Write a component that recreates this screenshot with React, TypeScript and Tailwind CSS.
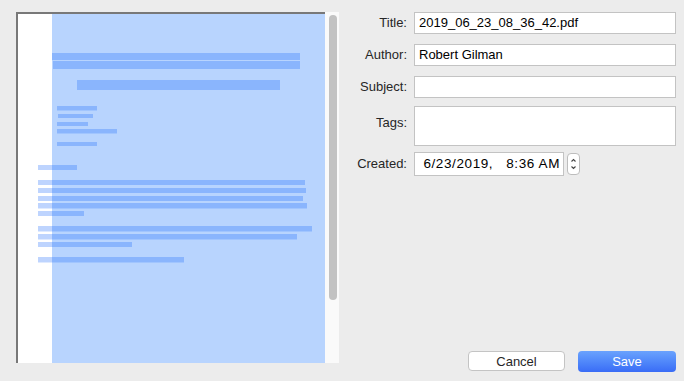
const bars = [
    [34, 39, 248, 7], [35, 47, 247, 8], [59, 66, 203, 10],
    [39, 92, 40, 4.5], [40, 100, 35, 4], [39, 108, 31, 4], [39, 115, 60, 4.5], [39, 128, 40, 4],
    [20, 151, 39, 5],
    [20, 166, 267, 5], [20, 174, 268, 5], [20, 182, 265, 5], [20, 189, 269, 5.5], [20, 197, 46, 5],
    [20, 212, 274, 5.5], [20, 220, 259, 5.5], [20, 228, 94, 5],
    [20, 243, 146, 5.5],
]

function PagePreview() {
    return (
        <div className="flex ml-4 mt-3 h-[351px]">
            <div className="w-[309px] h-full border-l-2 border-t-2 border-[#787878] bg-white">
                <svg width="307" height="349" className="block">
                    <rect x="34" y="0" width="273" height="349" fill="#b8d4fe" />
                    {bars.map(([x, y, w, h], i) =>
                        <rect key={i} x={x} y={y} width={w} height={h} fill="#1464fa" fillOpacity="0.28" />
                    )}
                </svg>
            </div>
            <div className="w-[14px] h-full bg-[#fafafa] pt-[3px] pl-[4px]">
                <div className="w-[8px] h-[285px] rounded-full bg-[#c2c2c2]" />
            </div>
        </div>
    )
}

function Field({ label, value, className }: { label: string, value?: string, className?: string }) {
    return (
        <div className={"flex items-center " + (className ?? "")}>
            <div className="w-[69px] text-right text-[13px] text-[#262626] pr-[1px]">{label}</div>
            <div className="ml-[6px] flex-1 h-[22px] border border-[#c3c3c3] bg-white px-[4px] flex items-center text-[13px] text-black">
                {value}
            </div>
        </div>
    )
}

export default function App() {
    return (
        <div className="w-[684px] h-[381px] bg-[#ececec] flex" style={{ fontFamily: '"Liberation Sans", Arial, sans-serif' }}>
            <PagePreview />
            <div className="flex-1 flex flex-col pr-2">
                <Field label="Title:" value="2019_06_23_08_36_42.pdf" className="mt-3" />
                <Field label="Author:" value="Robert Gilman" className="mt-[10px]" />
                <Field label="Subject:" className="mt-[10px]" />
                <div className="flex mt-2">
                    <div className="w-[69px] text-right text-[13px] text-[#262626] pr-[1px] pt-[7px]">Tags:</div>
                    <div className="ml-[6px] flex-1 h-[40px] border border-[#c3c3c3] bg-white" />
                </div>
                <div className="flex items-center mt-[6px]">
                    <div className="w-[69px] text-right text-[13px] text-[#262626] pr-[1px]">Created:</div>
                    <div className="ml-[6px] w-[150px] h-[24px] border border-[#c3c3c3] bg-white flex items-center justify-end pr-[3px] text-[13.5px] tracking-[0.6px] text-black whitespace-pre">
                        6/23/2019,   8:36 AM
                    </div>
                    <div className="ml-[3px] w-[13px] h-[22px] border border-[#bdbdbd] rounded-[4px] bg-white flex flex-col items-center justify-center">
                        <svg width="7" height="16" viewBox="0 0 7 16" fill="none" stroke="#444" strokeWidth="1.1">
                            <path d="M1.5 5.5 L3.5 3.5 L5.5 5.5" />
                            <path d="M1.5 10.5 L3.5 12.5 L5.5 10.5" />
                        </svg>
                    </div>
                </div>
                <div className="mt-auto mb-[9px] flex justify-end gap-[13px]">
                    <button className="w-[97px] h-[20px] rounded-[4px] border border-[#c4c4c4] bg-white text-[13px] text-[#262626] leading-none">
                        Cancel
                    </button>
                    <button className="w-[98px] h-[21px] rounded-[4px] bg-gradient-to-b from-[#6aa2fd] to-[#3a6cf6] text-[13px] text-white font-medium leading-none">
                        Save
                    </button>
                </div>
            </div>
        </div>
    )
}
